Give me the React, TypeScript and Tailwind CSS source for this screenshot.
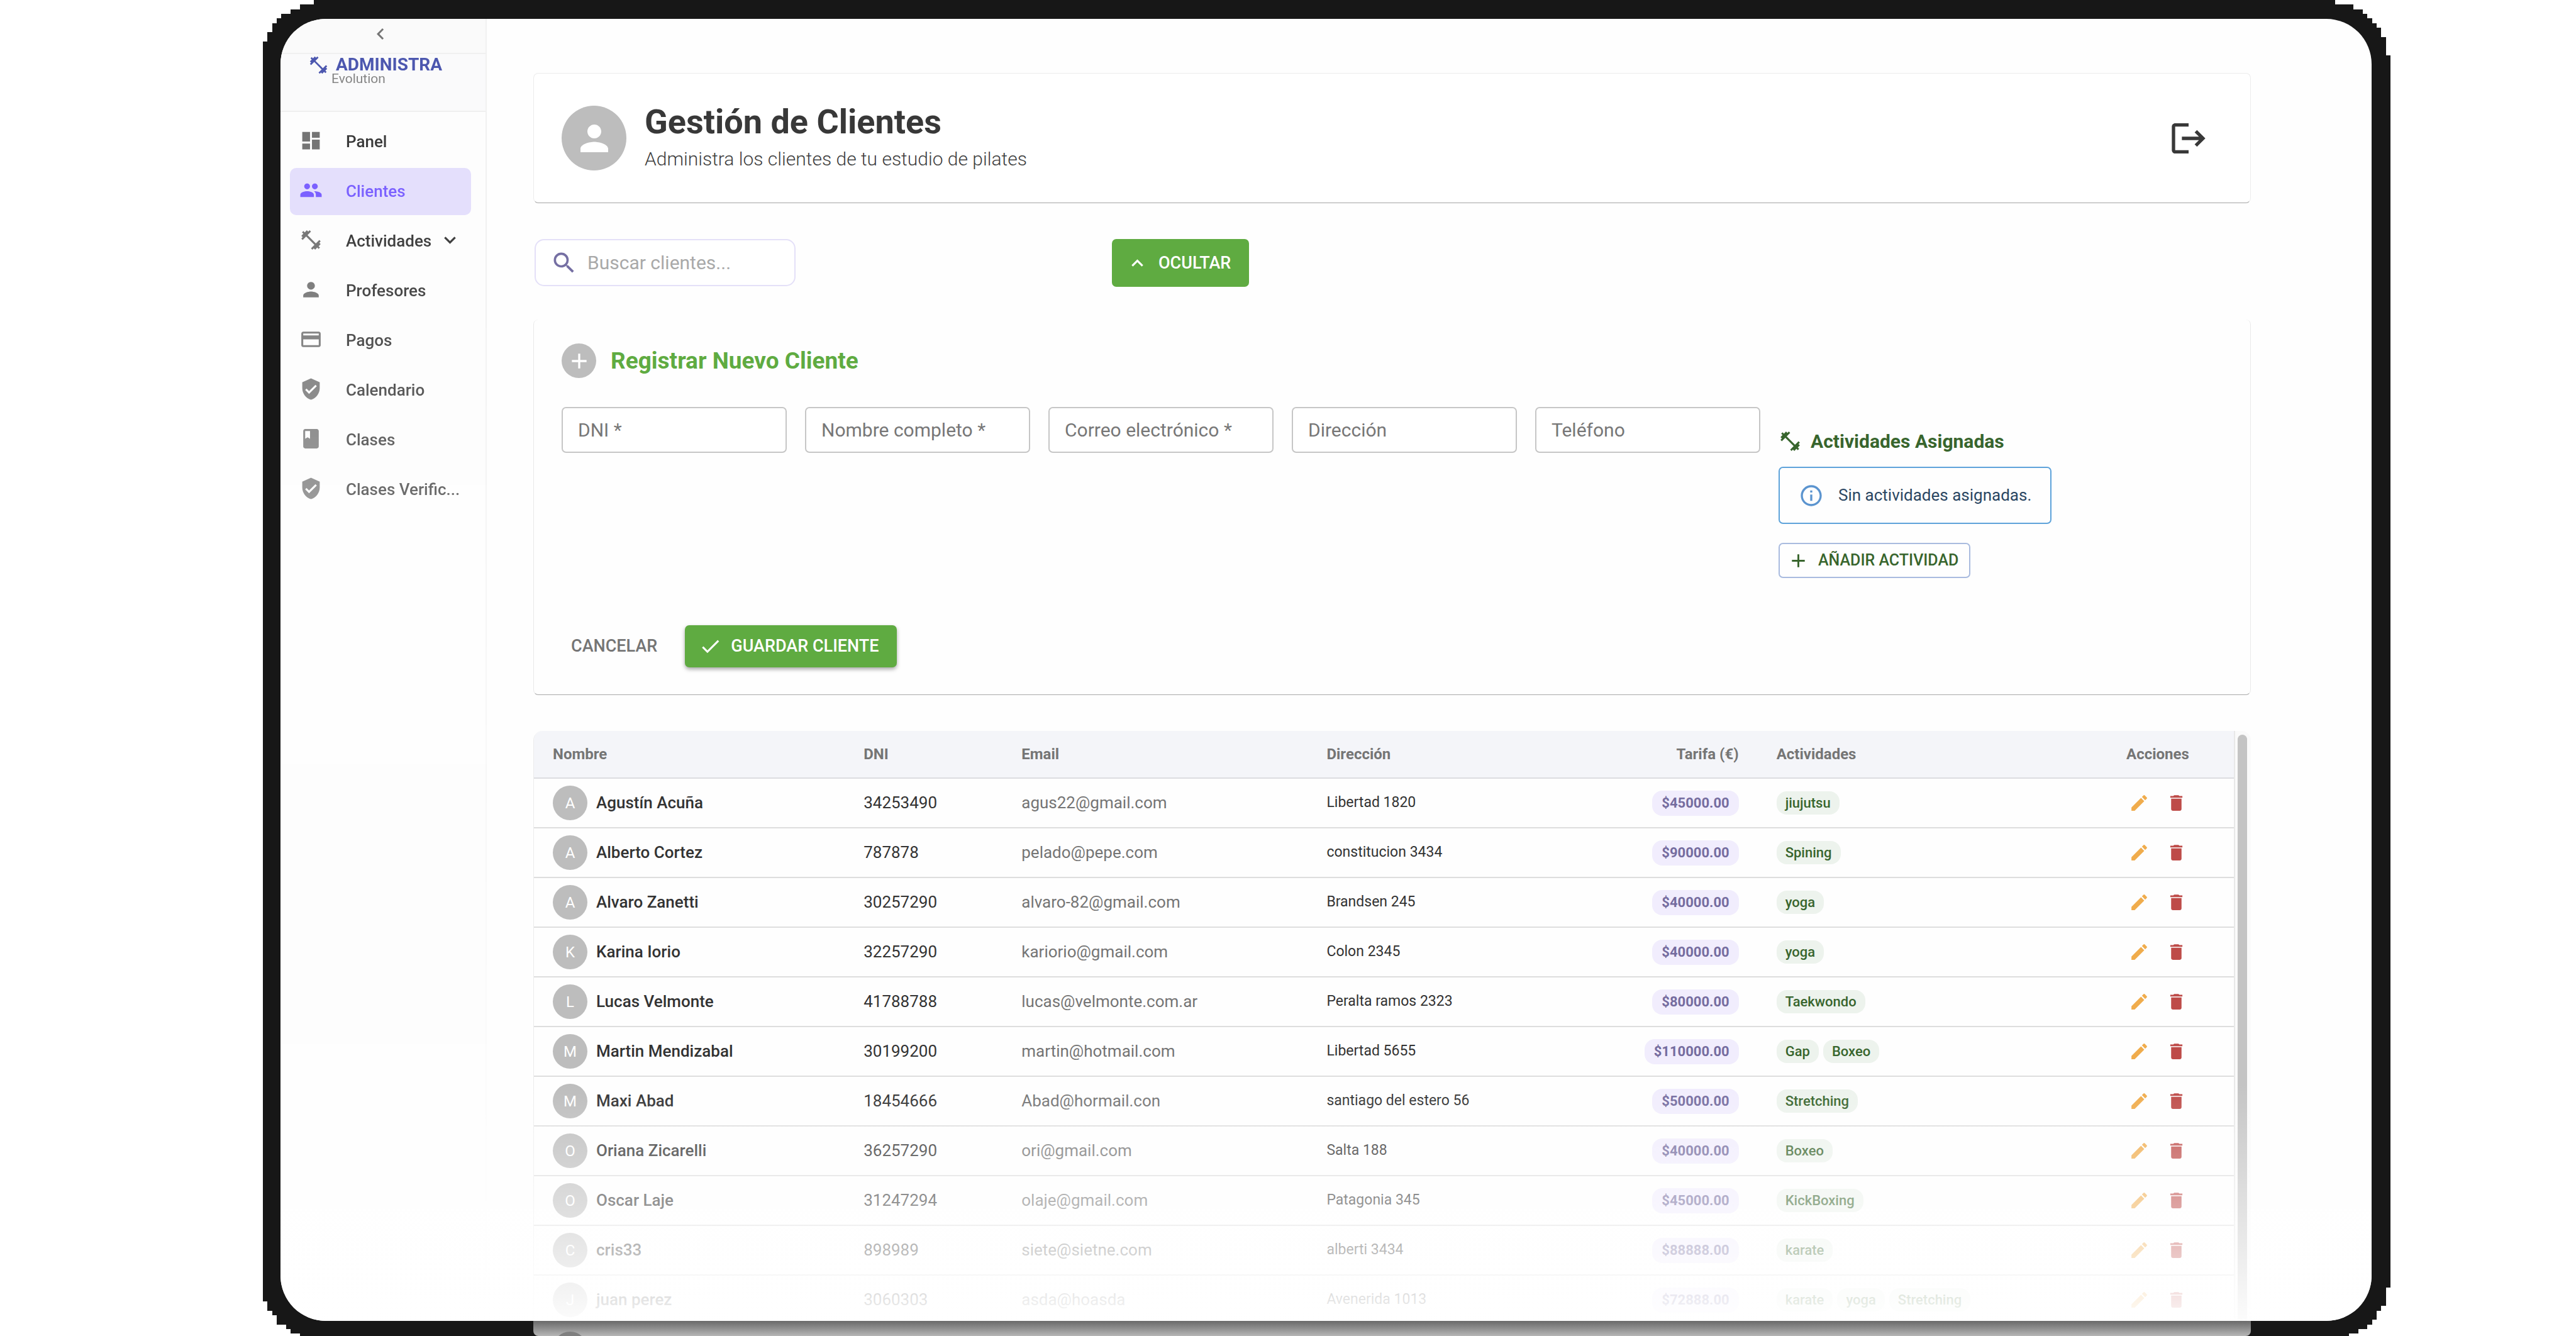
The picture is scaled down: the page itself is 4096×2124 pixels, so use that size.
import type { ReactNode } from "react";
import type { IconType } from "react-icons";
import {
  MdAdd,
  MdCheck,
  MdChevronLeft,
  MdClass,
  MdDashboard,
  MdDelete,
  MdEdit,
  MdExpandLess,
  MdExpandMore,
  MdFitnessCenter,
  MdInfoOutline,
  MdLogout,
  MdPayment,
  MdPeople,
  MdPerson,
  MdSearch,
  MdVerifiedUser,
} from "react-icons/md";

type NavEntry = { label: string; icon: IconType; active?: boolean; expandable?: boolean };

const navEntries: NavEntry[] = [
  { label: "Panel", icon: MdDashboard },
  { label: "Clientes", icon: MdPeople, active: true },
  { label: "Actividades", icon: MdFitnessCenter, expandable: true },
  { label: "Profesores", icon: MdPerson },
  { label: "Pagos", icon: MdPayment },
  { label: "Calendario", icon: MdVerifiedUser },
  { label: "Clases", icon: MdClass },
  { label: "Clases Verific...", icon: MdVerifiedUser },
];

const fields = ["DNI *", "Nombre completo *", "Correo electrónico *", "Dirección", "Teléfono"];

type Client = {
  name: string;
  dni: string;
  email: string;
  address: string;
  fee: string;
  activities: string[];
};

const clients: Client[] = [
  { name: "Agustín Acuña", dni: "34253490", email: "agus22@gmail.com", address: "Libertad 1820", fee: "$45000.00", activities: ["jiujutsu"] },
  { name: "Alberto Cortez", dni: "787878", email: "pelado@pepe.com", address: "constitucion 3434", fee: "$90000.00", activities: ["Spining"] },
  { name: "Alvaro Zanetti", dni: "30257290", email: "alvaro-82@gmail.com", address: "Brandsen 245", fee: "$40000.00", activities: ["yoga"] },
  { name: "Karina Iorio", dni: "32257290", email: "kariorio@gmail.com", address: "Colon 2345", fee: "$40000.00", activities: ["yoga"] },
  { name: "Lucas Velmonte", dni: "41788788", email: "lucas@velmonte.com.ar", address: "Peralta ramos 2323", fee: "$80000.00", activities: ["Taekwondo"] },
  { name: "Martin Mendizabal", dni: "30199200", email: "martin@hotmail.com", address: "Libertad 5655", fee: "$110000.00", activities: ["Gap", "Boxeo"] },
  { name: "Maxi Abad", dni: "18454666", email: "Abad@hormail.con", address: "santiago del estero 56", fee: "$50000.00", activities: ["Stretching"] },
  { name: "Oriana Zicarelli", dni: "36257290", email: "ori@gmail.com", address: "Salta 188", fee: "$40000.00", activities: ["Boxeo"] },
  { name: "Oscar Laje", dni: "31247294", email: "olaje@gmail.com", address: "Patagonia 345", fee: "$45000.00", activities: ["KickBoxing"] },
  { name: "cris33", dni: "898989", email: "siete@sietne.com", address: "alberti 3434", fee: "$88888.00", activities: ["karate"] },
  { name: "juan perez", dni: "3060303", email: "asda@hoasda", address: "Avenerida 1013", fee: "$72888.00", activities: ["karate", "yoga", "Stretching"] },
];

function Sidebar() {
  return (
    <aside className="flex w-[328px] shrink-0 flex-col border-r-2 border-[#f1f1f1] bg-[#fdfdfd] [mask-image:linear-gradient(to_bottom,black_300px,transparent)]">
      <div className="flex h-[56px] items-center justify-center border-b-2 border-[#f0f0f0] bg-[#fafafa] pr-[8px] pb-[6px]">
        <button type="button" aria-label="Contraer menú" className="text-[#757575]">
          <MdChevronLeft className="size-[36px]" />
        </button>
      </div>
      <div className="h-[92px] border-b-2 border-[#efefef] bg-[#fafafb] pt-[2px] pl-[44px]">
        <div className="flex h-[30px] items-center gap-[11px] text-[#4c57af]">
          <MdFitnessCenter className="size-[33px]" />
          <span className="text-[28px] leading-[30px] font-bold">ADMINISTRA</span>
        </div>
        <p className="pl-[37px] text-[21px] leading-[14px] text-[#858585]">Evolution</p>
      </div>
      <nav className="flex flex-col gap-[4px] pt-[10px] pr-[23px] pl-[15px]">
        {navEntries.map(({ label, icon: Icon, active, expandable }) => (
          <a
            key={label}
            href="#"
            aria-current={active ? "page" : undefined}
            className={
              active
                ? "flex h-[75px] items-center rounded-[10px] bg-[#e4dffc] pl-[15px] text-[#7b61ff]"
                : "flex h-[75px] items-center rounded-[10px] pl-[15px] text-[#3a3a3a]"
            }
          >
            <Icon
              className={
                active
                  ? "mr-[37px] mb-[4px] size-[37px] shrink-0"
                  : "mr-[37px] mb-[4px] size-[37px] shrink-0 text-[#757575]"
              }
            />
            <span className="text-[26px] font-medium">{label}</span>
            {expandable && <MdExpandMore className="mb-[4px] ml-[11px] size-[37px]" />}
          </a>
        ))}
      </nav>
    </aside>
  );
}

function PageHeader() {
  return (
    <header className="flex h-[207px] items-center rounded-[8px] border border-[#ececec] border-b-[#a4a4a4] bg-white pr-[66px] pl-[44px]">
      <span className="flex size-[103px] items-center justify-center rounded-full bg-[#bdbdbd] text-white">
        <MdPerson className="size-[66px]" />
      </span>
      <div className="ml-[29px] flex-1">
        <h1 className="text-[54px] leading-[62px] font-bold text-[#383838]">Gestión de Clientes</h1>
        <p className="mt-[4px] text-[30px] leading-[48px] font-light text-[#3f3f3f]">Administra los clientes de tu estudio de pilates</p>
      </div>
      <button type="button" aria-label="Cerrar sesión" className="text-[#383838]">
        <MdLogout className="size-[64px]" />
      </button>
    </header>
  );
}

function Toolbar() {
  return (
    <div className="mt-[57px] grid grid-cols-3 gap-[29px]">
      <div className="ml-[2px] flex h-[75px] w-[415px] items-center gap-[15px] rounded-[15px] border-2 border-[#e4e0f8] bg-white pl-[23px]">
        <MdSearch className="size-[44px] shrink-0 text-[#756fa3]" />
        <input
          type="search"
          aria-label="Buscar clientes"
          placeholder="Buscar clientes..."
          className="w-full min-w-0 bg-transparent text-[30px] outline-none placeholder:text-[#a9a9a9]"
        />
      </div>
      <button
        type="button"
        className="flex h-[76px] w-[218px] items-center gap-[15px] rounded-[7px] bg-[#5fab41] pl-[22px] text-[27px] font-medium text-white"
      >
        <MdExpandLess className="size-[37px]" />
        OCULTAR
      </button>
    </div>
  );
}

function ClientForm() {
  return (
    <form className="mt-[52px] rounded-[8px] border-x border-b border-x-[#e9e9e9] border-b-[#a8a8a8] px-[44px] pt-[38px] pb-[43px]">
      <div className="flex items-center gap-[23px]">
        <span className="flex size-[55px] items-center justify-center rounded-full bg-[#bdbdbd] text-white">
          <MdAdd className="size-[40px]" />
        </span>
        <h2 className="text-[37px] leading-[55px] font-bold text-[#5fab41]">Registrar Nuevo Cliente</h2>
      </div>
      <div className="mt-[46px] flex items-start gap-[29px]">
        {fields.map((field) => (
          <input
            key={field}
            type="text"
            aria-label={field}
            placeholder={field}
            className="h-[73px] w-[358px] rounded-[7px] border-2 border-[#c6c6c6] bg-white px-[24px] text-[30px] placeholder:text-[#777777]"
          />
        ))}
        <section className="flex flex-col items-start pt-[33px]">
          <h3 className="flex h-[42px] items-center gap-[14px] text-[30px] font-bold text-[#38652d]">
            <MdFitnessCenter className="size-[37px]" />
            Actividades Asignadas
          </h3>
          <p className="mt-[20px] flex h-[91px] items-center gap-[23px] rounded-[7px] border-2 border-[#5ea3da] px-[30px] text-[26px] whitespace-nowrap text-[#2b4763]">
            <MdInfoOutline className="size-[40px] text-[#5b94cf]" />
            Sin actividades asignadas.
          </p>
          <button
            type="button"
            className="mt-[30px] flex h-[56px] items-center gap-[14px] rounded-[7px] border-2 border-[#a9bbdf] pr-[17px] pl-[12px] text-[25px] font-medium whitespace-nowrap text-[#38652d]"
          >
            <MdAdd className="size-[35px]" />
            AÑADIR ACTIVIDAD
          </button>
        </section>
      </div>
      <div className="mt-[75px] flex items-center gap-[29px]">
        <button type="button" className="h-[67px] px-[15px] text-[27px] font-medium text-[#757575]">
          CANCELAR
        </button>
        <button
          type="submit"
          className="flex h-[67px] items-center gap-[14px] rounded-[7px] bg-[#5fab41] pr-[28px] pl-[22px] text-[27px] font-medium text-white shadow-[0_3px_6px_rgba(0,0,0,0.35)]"
        >
          <MdCheck className="size-[37px]" />
          GUARDAR CLIENTE
        </button>
      </div>
    </form>
  );
}

function Th({ children, align }: { children: ReactNode; align?: "right" | "center" }) {
  const alignment = align === "right" ? "text-right" : align === "center" ? "text-center" : "text-left";
  return (
    <th scope="col" className={`px-[30px] text-[24px] font-bold text-[#757575] ${alignment}`}>
      {children}
    </th>
  );
}

function ClientRow({ client }: { client: Client }) {
  return (
    <tr className="h-[79px] border-b-2 border-[#dedede]">
      <td className="px-[30px]">
        <div className="flex items-center gap-[14px]">
          <span className="flex size-[55px] items-center justify-center rounded-full bg-[#bdbdbd] text-[24px] text-white">
            {client.name[0].toUpperCase()}
          </span>
          <span className="text-[26px] font-medium text-[#333333]">{client.name}</span>
        </div>
      </td>
      <td className="px-[30px] text-[26px] text-[#333333]">{client.dni}</td>
      <td className="px-[30px] text-[26px] text-[#757575]">{client.email}</td>
      <td className="px-[30px] text-[23px] text-[#333333]">{client.address}</td>
      <td className="px-[30px] text-right">
        <span className="inline-flex h-[40px] items-center rounded-[16px] bg-[#f1edfd] px-[15px] text-[22px] font-bold text-[#756c9f]">
          {client.fee}
        </span>
      </td>
      <td className="px-[30px]">
        <div className="flex gap-[7px]">
          {client.activities.map((activity) => (
            <span
              key={activity}
              className="flex h-[37px] items-center rounded-[16px] bg-[#edf3ed] px-[14px] text-[22px] font-medium text-[#38652d]"
            >
              {activity}
            </span>
          ))}
        </div>
      </td>
      <td className="px-[30px]">
        <div className="flex justify-center gap-[26px]">
          <button type="button" aria-label={`Editar ${client.name}`} className="text-[#f0ac4c]">
            <MdEdit className="size-[33px]" />
          </button>
          <button type="button" aria-label={`Eliminar ${client.name}`} className="text-[#be4b48]">
            <MdDelete className="size-[33px]" />
          </button>
        </div>
      </td>
    </tr>
  );
}

function ClientTable() {
  return (
    <div className="mt-[57px] flex min-h-0 flex-1 overflow-hidden rounded-t-[15px] border-l border-[#ececec]">
      <div className="min-w-0 flex-1 overflow-hidden">
        <table className="w-full table-fixed border-collapse">
          <colgroup>
            <col className="w-[494px]" />
            <col className="w-[251px]" />
            <col className="w-[485px]" />
            <col className="w-[491px]" />
            <col className="w-[224px]" />
            <col className="w-[515px]" />
            <col className="w-[242px]" />
          </colgroup>
          <thead>
            <tr className="h-[75px] border-b-2 border-[#dcdde0] bg-[#f4f5f9]">
              <Th>Nombre</Th>
              <Th>DNI</Th>
              <Th>Email</Th>
              <Th>Dirección</Th>
              <Th align="right">Tarifa (€)</Th>
              <Th>Actividades</Th>
              <Th align="center">Acciones</Th>
            </tr>
          </thead>
          <tbody>
            {clients.map((client) => (
              <ClientRow key={client.name} client={client} />
            ))}
          </tbody>
        </table>
      </div>
      <div className="flex w-[27px] flex-col border-l-2 border-[#e8e8e8] bg-[#fafafa] pt-[6px] pl-[4px]">
        <div className="w-[15px] flex-1 rounded-t-[8px] bg-[#c4c4c4]" />
      </div>
    </div>
  );
}

export default function App() {
  return (
    <div className="flex h-screen overflow-hidden bg-white pr-[295px] pl-[418px] font-['Roboto',sans-serif]">
      <div className="flex min-w-0 flex-1 flex-col bg-[#171717] pt-[30px] pr-[30px] pl-[28px] [clip-path:polygon(81px_0,calc(100%_-_88px)_0,calc(100%_-_88px)_7px,calc(100%_-_59px)_7px,calc(100%_-_59px)_15px,calc(100%_-_44px)_15px,calc(100%_-_44px)_22px,calc(100%_-_37px)_22px,calc(100%_-_37px)_29px,calc(100%_-_29px)_29px,calc(100%_-_29px)_37px,calc(100%_-_22px)_37px,calc(100%_-_22px)_44px,calc(100%_-_15px)_44px,calc(100%_-_15px)_59px,calc(100%_-_7px)_59px,calc(100%_-_7px)_88px,100%_88px,100%_calc(100%_-_77px),calc(100%_-_7px)_calc(100%_-_77px),calc(100%_-_7px)_calc(100%_-_48px),calc(100%_-_15px)_calc(100%_-_48px),calc(100%_-_15px)_calc(100%_-_40px),calc(100%_-_22px)_calc(100%_-_40px),calc(100%_-_22px)_calc(100%_-_26px),calc(100%_-_29px)_calc(100%_-_26px),calc(100%_-_29px)_calc(100%_-_18px),calc(100%_-_37px)_calc(100%_-_18px),calc(100%_-_37px)_calc(100%_-_11px),calc(100%_-_51px)_calc(100%_-_11px),calc(100%_-_51px)_calc(100%_-_4px),calc(100%_-_66px)_calc(100%_-_4px),calc(100%_-_66px)_100%,59px_100%,59px_calc(100%_-_4px),44px_calc(100%_-_4px),44px_calc(100%_-_11px),37px_calc(100%_-_11px),37px_calc(100%_-_18px),22px_calc(100%_-_18px),22px_calc(100%_-_33px),15px_calc(100%_-_33px),15px_calc(100%_-_40px),7px_calc(100%_-_40px),7px_calc(100%_-_55px),0_calc(100%_-_55px),0_66px,7px_66px,7px_51px,15px_51px,15px_37px,22px_37px,22px_29px,29px_29px,29px_22px,44px_22px,44px_15px,59px_15px,59px_7px,81px_7px)]">
        <div className="relative flex min-h-0 flex-1 overflow-hidden rounded-[72px] bg-[#fefefe]">
          <Sidebar />
          <main className="flex min-w-0 flex-1 flex-col pt-[86px] pr-[192px] pl-[74px]">
            <PageHeader />
            <Toolbar />
            <ClientForm />
            <ClientTable />
          </main>
          <div className="pointer-events-none absolute inset-x-0 bottom-0 h-[376px] bg-linear-to-b from-white/0 to-white/95" />
        </div>
        {/* Lower edge of the table card, visible over the bezel */}
        <div className="mr-[192px] ml-[402px] h-[24px] overflow-hidden rounded-b-[8px] bg-linear-to-b from-[#6a6a6a] to-[#b6b6b6]">
          <div className="mt-[17px] ml-[31px] size-[55px] rounded-full bg-[#7f7f7f]" />
        </div>
      </div>
    </div>
  );
}
